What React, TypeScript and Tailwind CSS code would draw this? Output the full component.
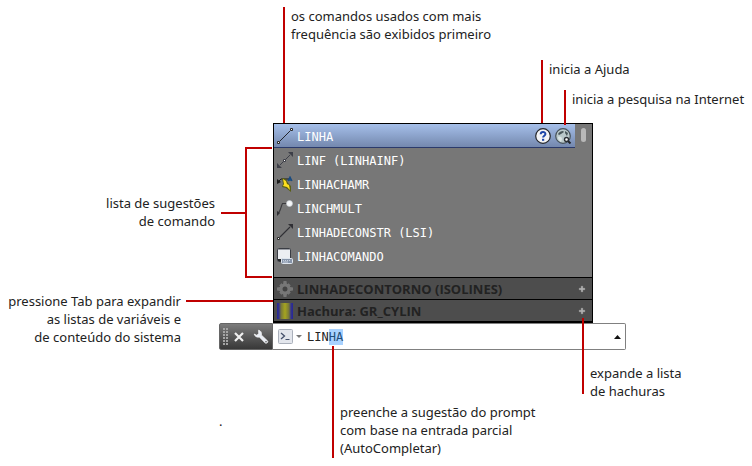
import { useEffect, useRef, useState, type ReactNode } from "react";
import { clsx } from "clsx";

function LineIcon() {
  return (
    <svg width="16" height="16" viewBox="0 0 16 16">
      <path d="M3 13 13 3" stroke="#23262e" strokeWidth="1" />
      <path d="M.5 13.500h2v2h-2zM13.500 .5h2v2h-2z" fill="#fff" stroke="#2b2b2b" />
    </svg>
  );
}

function XLineIcon() {
  return (
    <svg width="16" height="16" viewBox="0 0 16 16">
      <path d="M3 13 13 3" stroke="#3d3f48" strokeWidth="1" />
      <path d="M16 0v5L11 0zM0 16v-5l5 5z" fill="#3d3f48" />
      <path d="M6.500 7.500h2v2h-2z" fill="#fff" stroke="#3d3f48" />
    </svg>
  );
}

function QuickLeaderIcon() {
  return (
    <svg width="16" height="16" viewBox="0 0 16 16">
      <path d="M1 6l3-3h8" fill="none" stroke="#1b1b1b" />
      <path d="M0 3l4 3-4 2z" fill="#1b1b1b" />
      <path d="M5 2l4 1 2 4 3 3v6l-5-4-4-1 1-3z" fill="#5a5f14" />
      <path d="M6 3l3 2 1 3 2 1 1 5-3-3-4-1 1-2z" fill="#ffe01f" />
      <path d="m11 5 2-4 2 4M12 4h2" fill="none" stroke="#164a80" strokeWidth="1.3" />
    </svg>
  );
}

function MultiLeaderIcon() {
  return (
    <svg width="16" height="16" viewBox="0 0 16 16">
      <path d="M1.500 13C4 10 4 6 5.500 3.500H10" fill="none" stroke="#3b3b3f" strokeWidth="1.2" />
      <path d="M0 16v-5l3 2z" fill="#2f2f33" />
      <circle cx="12.500" cy="3.500" r="3" fill="#f4f6f8" stroke="#c5cad0" strokeWidth=".6" />
    </svg>
  );
}

function RayIcon() {
  return (
    <svg width="16" height="16" viewBox="0 0 16 16">
      <path d="M3 13 13 3" stroke="#303035" strokeWidth="1.1" />
      <path d="M16 0v5L11 0z" fill="#303035" />
      <path d="M.5 13.500h2v2h-2z" fill="#fff" stroke="#2b2b2b" />
    </svg>
  );
}

function CommandLineIcon() {
  return (
    <svg width="16" height="16" viewBox="0 0 16 16">
      <rect x=".5" y=".5" width="13" height="13" rx="1" fill="#eceef2" stroke="#3a3d44" />
      <path d="M1 1h12v1H1z" fill="#9a9da4" />
      <path d="M1 11h3v2H1z" fill="#252729" />
      <rect x="4.500" y="10.500" width="11" height="5" rx="1" fill="#8795aa" stroke="#dfe6ee" />
      <path d="M6 12.500h1m1 0h1m1 0h1m1 0h1M6 14h5" stroke="#d5dde8" strokeWidth=".8" />
    </svg>
  );
}

function GearIcon() {
  return (
    <svg width="16" height="16" viewBox="0 0 16 16">
      <g fill="#777">
        <path d="M6.500 0h3l.4 3H6.100zM6.500 16h3l.4-3H6.100zM0 6.500v3l3 .4V6.100zM16 6.500v3l-3 .4V6.100z" />
        <path d="m2.300 4.400 2.100-2.100 2.500 1.900-2.700 2.700zM13.700 11.600l-2.100 2.100-2.500-1.900 2.700-2.700zM4.400 13.700l-2.100-2.100 1.900-2.500 2.700 2.700zM11.600 2.300l2.100 2.100-1.900 2.500-2.700-2.700z" />
      </g>
      <circle cx="8" cy="8" r="4" fill="none" stroke="#777" strokeWidth="3" />
      <circle cx="8" cy="8" r="2.200" fill="#444" />
    </svg>
  );
}

function HatchIcon() {
  return (
    <span className="block size-4 bg-[linear-gradient(to_right,#26269a_0%,#33338c_12%,#77773a_25%,#a5a41f_50%,#77773a_75%,#33338c_88%,#26269a_100%)]" />
  );
}

function HelpIcon() {
  return (
    <svg width="16" height="16" viewBox="0 0 16 16">
      <circle cx="8" cy="8" r="7.300" fill="#f3f4f6" stroke="#25272b" strokeWidth="1.200" />
      <path d="M5.700 6.300C5.700 3.300 10.400 3.300 10.400 6c0 1.700-2.300 1.700-2.300 3.600" fill="none" stroke="#1c45a8" strokeWidth="2" />
      <path d="M7 10.800h2.200v2H7z" fill="#1c45a8" />
    </svg>
  );
}

function WebSearchIcon() {
  return (
    <svg width="17" height="16" viewBox="0 0 17 16">
      <circle cx="8" cy="8" r="7.300" fill="#b9c8ca" stroke="#46525a" strokeWidth="1.200" />
      <path d="M3 6c1-2 3-3 5-3l1 1-3 2-2 1zM10 3l3 2-1 3-2-3z" fill="#48565a" />
      <path d="M3 9c2-1 4 0 4 2l-1 3c-2-1-3-3-3-5z" fill="#dbe5e4" />
      <path d="m12.500 12.500 3 3" stroke="#20252a" strokeWidth="2" />
      <circle cx="11.500" cy="11.500" r="2" fill="#fff" stroke="#2b3036" strokeWidth="1.400" />
    </svg>
  );
}

function PlusIcon() {
  return (
    <svg width="8" height="8" viewBox="0 0 8 8">
      <path d="M3 1h2v2h2v2H5v2H3V5H1V3h2z" fill="#adadad" stroke="#777" strokeWidth=".4" />
    </svg>
  );
}

function WrenchIcon() {
  return (
    <svg width="16" height="16" viewBox="0 0 16 16">
      <path
        d="M5.500 1.200C7.800 1.600 9 3.600 8.400 6l6 5.700c1.300 1.300-.9 3.500-2.300 2.200L6.300 8C4 8.700 1.600 7.400 1.200 5l2.600 1.200 1.900-1.600z"
        fill="#e9edf4"
        stroke="#fff"
        strokeWidth=".6"
      />
      <circle cx="13" cy="12.700" r=".8" fill="#555" />
    </svg>
  );
}

function PromptIcon() {
  return (
    <svg width="15" height="15" viewBox="0 0 15 15">
      <rect x=".5" y=".5" width="14" height="14" rx="1" fill="#e3e6ec" stroke="#aab0bb" />
      <path d="m3 4 3.500 3L3 10" fill="none" stroke="#44506a" strokeWidth="1.300" />
      <path d="M7.500 10.500h4" stroke="#44506a" />
    </svg>
  );
}

const COMMANDS = [
  { name: "LINHA", icon: <LineIcon /> },
  { name: "LINF (LINHAINF)", icon: <XLineIcon /> },
  { name: "LINHACHAMR", icon: <QuickLeaderIcon /> },
  { name: "LINCHMULT", icon: <MultiLeaderIcon /> },
  { name: "LINHADECONSTR (LSI)", icon: <RayIcon /> },
  { name: "LINHACOMANDO", icon: <CommandLineIcon /> },
];

const CATEGORIES = [
  { name: "LINHADECONTORNO (ISOLINES)", icon: <GearIcon /> },
  { name: "Hachura: GR_CYLIN", icon: <HatchIcon /> },
];

function Callout({ className, children }: { className: string; children: ReactNode }) {
  return (
    <p className={clsx("relative z-10 shrink-0 whitespace-nowrap border-l-2 border-[#c00000] pl-1.5", className)}>
      {children}
    </p>
  );
}

function SuggestionPopup() {
  return (
    <div className="w-full max-w-[320px] border border-b-2 border-black bg-[#777]">
      <div className="flex h-[153px]">
        <ul className="flex-1">
          {COMMANDS.map((cmd, i) => (
            <li
              key={cmd.name}
              className={clsx(
                "flex h-6 items-center pr-[3px]",
                i === 0 && "border-b border-[#2b3a6b] bg-linear-to-b from-[#a6c0ea] to-[#7488ae]"
              )}
            >
              <button
                type="button"
                className="flex flex-1 items-center gap-1 pl-[3px] font-['DejaVu_Sans_Mono',monospace] text-xs text-white"
              >
                {cmd.icon}
                <span className="pt-0.5">{cmd.name}</span>
              </button>
              {i === 0 && (
                <span className="flex gap-1">
                  <button type="button" aria-label="Ajuda">
                    <HelpIcon />
                  </button>
                  <button type="button" aria-label="Pesquisar na Internet">
                    <WebSearchIcon />
                  </button>
                </span>
              )}
            </li>
          ))}
        </ul>
        <div className="w-[17px] pt-1 pl-1.5">
          <div className="h-[14px] w-[5px] rounded-sm bg-[#b8b8b8]" />
        </div>
      </div>
      {CATEGORIES.map((cat) => (
        <button
          key={cat.name}
          type="button"
          className="flex h-[22px] w-full items-center gap-1 border-t border-black bg-[#4d4d4d] pr-1.5 pl-[3px] font-['Open_Sans',sans-serif] text-[13px] leading-5 font-bold text-[#222]"
        >
          {cat.icon}
          <span className="flex-1 text-left">{cat.name}</span>
          <PlusIcon />
        </button>
      ))}
    </div>
  );
}

function CommandBar() {
  const input = useRef<HTMLInputElement>(null);
  const [value, setValue] = useState("LINHA");

  // keep the autocompleted tail selected
  useEffect(() => {
    input.current?.focus();
    input.current?.setSelectionRange(3, 5);
  }, []);

  return (
    <div className="flex h-[27px] w-full max-w-[407px]">
      <div className="flex w-[54px] items-center rounded-l-xs border border-[#666] bg-linear-to-b from-[#7c7c7c] to-[#383838] pl-[3px]">
        <span className="grid grid-cols-2 gap-px">
          {Array.from({ length: 12 }, (_, i) => (
            <span key={i} className="size-[2px] bg-[#a5a5a5]" />
          ))}
        </span>
        <button type="button" aria-label="Fechar" className="ml-[6px]">
          <svg width="10" height="10" viewBox="0 0 10 10">
            <path d="m1 1 8 8M9 1 1 9" stroke="#f0f0f0" strokeWidth="2.200" />
          </svg>
        </button>
        <button type="button" aria-label="Personalizar" className="ml-[9px]">
          <WrenchIcon />
        </button>
      </div>
      <div className="flex flex-1 items-center rounded-r-xs border border-l-0 border-[#808080] bg-white pr-1 pl-[5px]">
        <button type="button" aria-label="Comandos recentes" className="flex items-center gap-[3px]">
          <PromptIcon />
          <svg width="6" height="4" viewBox="0 0 6 4">
            <path d="M0 0h6L3 3z" fill="#777" />
          </svg>
        </button>
        <input
          ref={input}
          aria-label="Linha de comando"
          value={value}
          onChange={(e) => setValue(e.target.value)}
          className="ml-[5px] min-w-0 flex-1 font-['DejaVu_Sans_Mono',monospace] text-xs text-[#222] outline-none selection:bg-[#a8d2ff] selection:text-[#1f4e79]"
        />
        <button type="button" aria-label="Histórico">
          <svg width="7" height="4" viewBox="0 0 7 4">
            <path d="M3.500 0 7 4H0z" fill="#111" />
          </svg>
        </button>
      </div>
    </div>
  );
}

export default function App() {
  return (
    <main className="min-h-screen overflow-hidden bg-white font-['Noto_Sans',sans-serif] text-[13px] leading-[18px] text-[#222]">
      <div className="flex h-[123px] pl-[283px]">
        <Callout className="mt-[7px] h-[116px] w-[258px]">
          os comandos usados com mais
          <br />
          frequência são exibidos primeiro
        </Callout>
        <Callout className="mt-[60px] h-[63px] w-[23px]">inicia a Ajuda</Callout>
        <Callout className="mt-[90px] h-[35px]">inicia a pesquisa na Internet</Callout>
      </div>

      <div className="flex">
        <div className="flex w-[219px] shrink-0 flex-col text-right">
          <p className="mt-[71px] h-[98px] pr-1">
            lista de sugestões
            <br />
            de comando
          </p>
          <div className="flex gap-[5px]">
            <p className="w-[181px] shrink-0 whitespace-nowrap">
              pressione Tab para expandir
              <br />
              as listas de variáveis e
              <br />
              de conteúdo do sistema
            </p>
            <span className="mt-2 h-[2px] w-[87px] shrink-0 bg-[#c00000]" />
          </div>
        </div>
        <div className="flex-1">
          <div className="flex">
            <div className="mt-6 flex h-[131px] w-[54px] shrink-0 items-center pr-px pl-[2px]">
              <span className="h-[2px] w-6 bg-[#c00000]" />
              <span className="h-full flex-1 border-y-2 border-l-2 border-[#c00000]" />
            </div>
            <SuggestionPopup />
          </div>
          <CommandBar />
        </div>
      </div>

      <div className="flex pl-[219px]">
        <p className="mt-[62px] w-[113px]">.</p>
        <Callout className="-mt-1 h-[112px] w-[250px] pt-[57px]">
          preenche a sugestão do prompt
          <br />
          com base na entrada parcial
          <br />
          (AutoCompletar)
        </Callout>
        <Callout className="-mt-8 h-[76px] pt-[46px]">
          expande a lista
          <br />
          de hachuras
        </Callout>
      </div>
    </main>
  );
}
